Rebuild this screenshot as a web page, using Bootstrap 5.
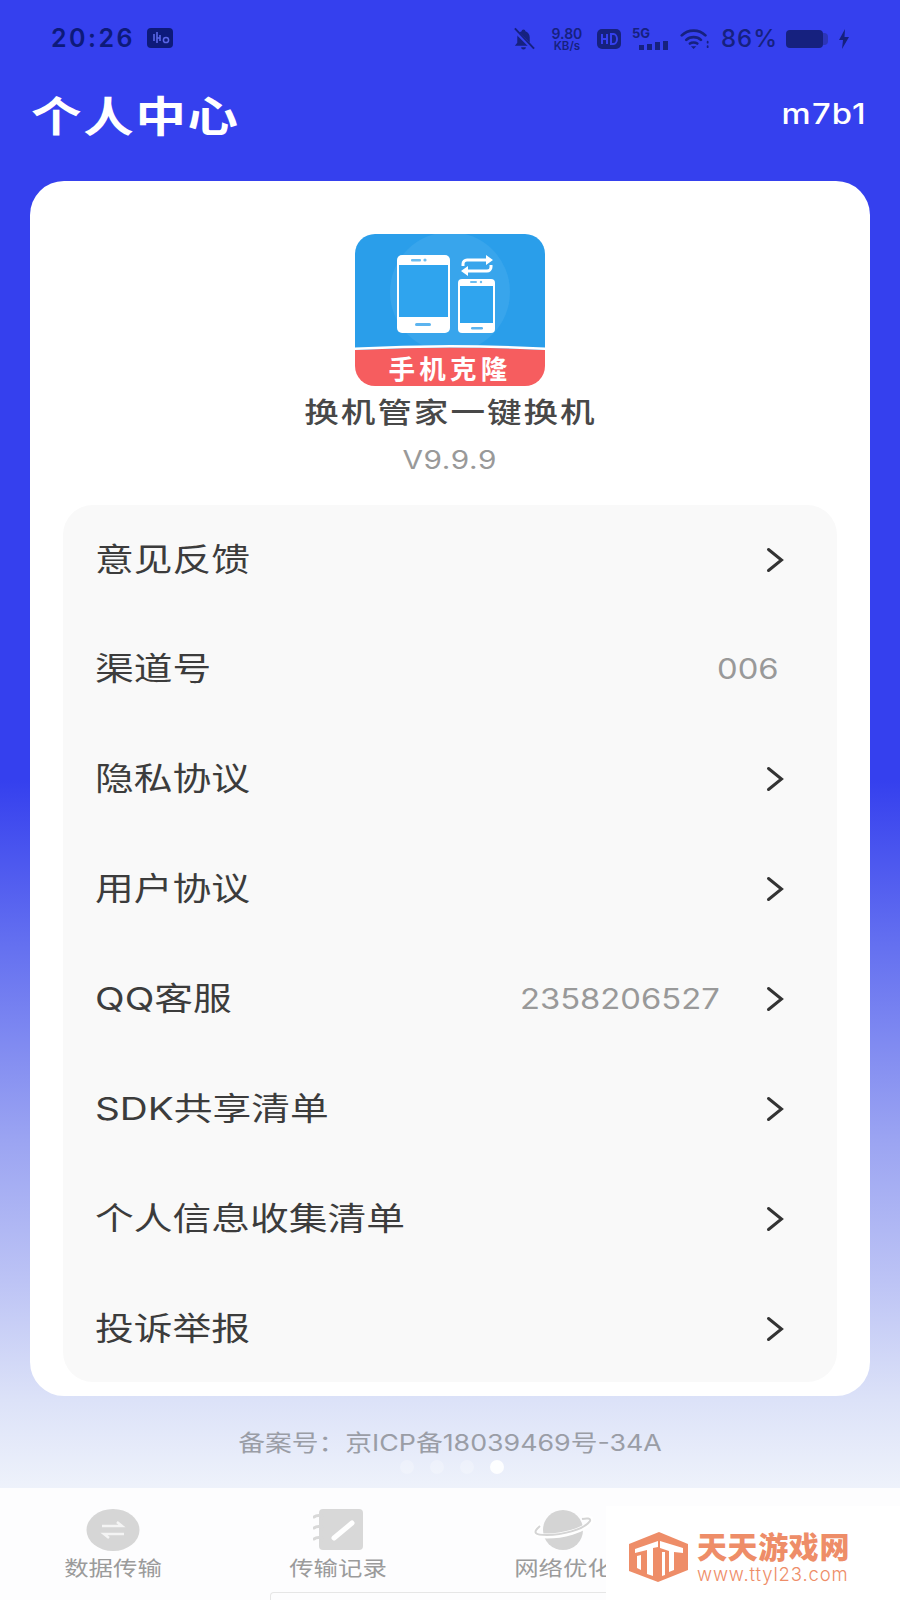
<!DOCTYPE html>
<html lang="zh">
<head>
<meta charset="utf-8">
<title>个人中心</title>
<link rel="stylesheet" href="https://cdn.jsdelivr.net/npm/bootstrap@5.3.0/dist/css/bootstrap.min.css">
<style>
html,body{margin:0;padding:0}
body{width:900px;height:1600px;overflow:hidden;font-family:"Inter","Noto Sans CJK SC",sans-serif;background:#fff}
.screen{width:900px;height:1600px;background:linear-gradient(180deg,#3540ee 0,#3540ee 780px,#6470f0 945px,#9ba4f2 1140px,#bcc3f5 1280px,#dce2f8 1400px,#eef2fb 1488px)}
.wl,.wr,.wc{display:inline-block;white-space:nowrap}
.wl{transform:scaleX(1.23);transform-origin:left center}
.wr{transform:scaleX(1.17);transform-origin:right center}
.wc{transform:scaleX(1.19);transform-origin:center}
.stat{height:76px;padding:24px 50px 0 51px;color:#0d1a7a}
.stat-l{gap:12px}
.stat-time{font-size:25px;font-weight:600;letter-spacing:2.500px;line-height:28px}
.stat-r{font-size:24px;font-weight:500;letter-spacing:1px;height:30px;gap:11px;color:#16217f}
.speed{font-weight:600;text-align:center;width:38px;letter-spacing:0}
.speed b{display:block;font-weight:600;font-size:14px;line-height:13px}
.speed em{display:block;font-style:normal;font-size:11.500px;line-height:12px}
.sig{width:37px;letter-spacing:0}
.sig-t{display:block;font-size:13px;font-weight:700;line-height:11px}
.sig svg{display:block}
.bell{margin-right:2px}
.wifi{margin-right:1px}
.pct{margin-right:-3px}
.batt{margin-right:-3px}
.head{height:105px;padding:0 33px 23px 31px;color:#fff}
.head-t{font-size:42px;font-weight:700;letter-spacing:1.500px;line-height:1;transform:scaleX(1.2)}
.head-u{font-size:28px;font-weight:500;letter-spacing:1px;padding-bottom:6px}
.panel{width:840px;height:1215px;margin-left:30px;background:#fff;border-radius:34px;padding:53px 33px 14px}
.logo{display:block;width:190px;height:152px}
.app-n{font-size:28px;font-weight:500;color:#484848;letter-spacing:1.600px;line-height:36px;margin-top:9px;transform:scaleX(1.235)}
.app-v{font-size:25px;color:#999;line-height:36px;margin-top:11px;letter-spacing:.5px}
.menu{height:877px;margin-top:27px;background:#f9f9f9;border-radius:30px;padding:0 53px 0 32px}
.menu-r{height:110px;color:#3c3c3c;font-size:31.500px;line-height:1}
.menu-r:first-child{height:109px}
.val{font-size:28px;color:#999}
.chev{width:18px;height:26px;margin-left:46px;flex:none}
.val-pad{width:5px;flex:none}
.rec{height:92px;color:#9a9da6;font-size:22.500px;padding-top:1px}
.tabs{height:112px;background:#fdfdfe;position:relative;padding-top:20px}
.tab{width:225px;color:#9b9b9b;font-size:20.500px;line-height:26px}
.tab svg{display:block;height:44px;margin-bottom:4px}
.dots{position:absolute;left:400px;top:-28px}
.dots i{width:14px;height:14px;border-radius:50%;background:#fff;opacity:.25;display:block}
.dots i:last-child{opacity:.9}
.homebar{position:absolute;left:270px;bottom:0;width:340px;height:8px;border:1px solid #e6e6e6;border-bottom:0;border-radius:4px 4px 0 0}
.mark-box{position:absolute;left:606px;top:18px;width:294px;height:94px;background:#fff;color:#ee8d68;padding:10px 0 0 23px}
.mark-t{font-size:30px;font-weight:900;line-height:32px;letter-spacing:.6px}
.mark-u{font-size:18.500px;font-weight:300;line-height:22px;letter-spacing:.85px}
</style>
</head>
<body>
<svg width="0" height="0" class="position-absolute"><defs><path id="chev-p" d="M2.500 2.500L15.500 13 2.500 23.500" fill="none" stroke="#333" stroke-width="3" stroke-linecap="round"/></defs></svg>
<div class="screen d-flex flex-column">
  <div class="stat d-flex justify-content-between align-items-start">
    <div class="stat-l d-flex align-items-center">
      <span class="stat-time">20:26</span>
      <svg width="26" height="20" viewBox="0 0 26 20"><rect width="26" height="20" rx="4" fill="#0d1a7a"/><path d="M7 6v7M10 4v11M10 10h3M13 7v6" stroke="#5a66e8" stroke-width="1.6" fill="none"/><circle cx="19" cy="12" r="2.600" fill="none" stroke="#5a66e8" stroke-width="1.5"/></svg>
    </div>
    <div class="stat-r d-flex align-items-center">
      <svg class="bell" width="23" height="24" viewBox="0 0 24 24" fill="#16217f"><path d="M12 2a2 2 0 0 1 2 2c3 1 4.500 3.500 4.500 6.500V16l2.500 3H3l2.500-3v-5.500C5.500 7.500 7 5 10 4a2 2 0 0 1 2-2zM9.500 20.500h5a2.500 2.500 0 0 1-5 0z"/><path d="M2 2l20 20" stroke="#3540ee" stroke-width="4"/><path d="M3 1l20 21" stroke="#16217f" stroke-width="2"/></svg>
      <span class="speed"><b>9.80</b><em>KB/s</em></span>
      <svg width="24" height="20" viewBox="0 0 24 20"><rect width="24" height="20" rx="5" fill="#16217f"/><path d="M5 5v10M5 10h5M10 5v10M14 5v10h2.500a3.500 5 0 0 0 0-10z" stroke="#3540ee" stroke-width="2" fill="none"/></svg>
      <span class="sig"><span class="sig-t">5G</span><svg width="37" height="11" viewBox="0 0 37 11"><rect x="7" y="6" width="5" height="5" fill="#16217f"/><rect x="15" y="5" width="5" height="6" fill="#16217f"/><rect x="23" y="3" width="5" height="8" fill="#16217f"/><rect x="31" y="2" width="5" height="9" fill="#16217f"/></svg></span>
      <svg class="wifi" width="29" height="22" viewBox="0 0 32 24" fill="none" stroke="#16217f" stroke-width="3" stroke-linecap="round"><path d="M2 8c7-7 19-7 26 0M7 13c4-4 12-4 16 0M11 17c2-1.500 6-1.500 8 0"/><path d="M12 20h6l-3 3z" fill="#16217f" stroke="none"/><path d="M30.500 15v1M30.500 20v1" stroke-width="2"/></svg>
      <span class="pct">86%</span>
      <svg class="batt" width="44" height="20" viewBox="0 0 44 20"><rect width="37" height="18" y="1" rx="4" fill="#16217f"/><path d="M37 4h1a4 4 0 0 1 4 4v4a4 4 0 0 1-4 4h-1z" fill="#2c35b8"/></svg>
      <svg width="12" height="20" viewBox="0 0 12 20" fill="#16217f"><path d="M7 0L1 11h4l-1 9 7-12H6.500z"/></svg>
    </div>
  </div>
  <div class="head d-flex justify-content-between align-items-center">
    <span class="wl head-t">个人中心</span>
    <span class="wr head-u">m7b1</span>
  </div>
  <div class="panel">
    <div class="d-flex flex-column align-items-center">
      <svg class="logo" viewBox="0 0 190 152">
        <path d="M0 116V20A20 20 0 0 1 20 0H170a20 20 0 0 1 20 20V116z" fill="#2a9eea"/>
        <circle cx="95" cy="58" r="60" fill="#38a5ec"/>
        <rect x="42" y="21" width="53" height="78" rx="5" fill="#fff"/>
        <rect x="44" y="31" width="49" height="52" fill="#2fa4ee"/>
        <rect x="56" y="25" width="10" height="2.500" rx="1" fill="#6cbdf0"/><circle cx="70" cy="26" r="1.600" fill="#6cbdf0"/>
        <rect x="60" y="89" width="16" height="3" rx="1.500" fill="#5cb4ef"/>
        <rect x="103" y="45" width="37" height="54" rx="4" fill="#fff"/>
        <rect x="105" y="52" width="33" height="37" fill="#2fa4ee"/>
        <rect x="115" y="47" width="7" height="2" rx="1" fill="#6cbdf0"/><circle cx="126" cy="48" r="1.200" fill="#6cbdf0"/>
        <rect x="116" y="93" width="12" height="2.500" rx="1.200" fill="#5cb4ef"/>
        <g fill="none" stroke="#fff" stroke-width="3"><path d="M108 32v-2a4 4 0 0 1 4-4h22"/><path d="M136 31v2a4 4 0 0 1-4 4h-22"/></g>
        <path d="M131 21l7 5-7 5zM113 32l-7 5 7 5z" fill="#fff"/>
        <path d="M0 116q95-5 190 0V132a20 20 0 0 1-20 20H20a20 20 0 0 1-20-20z" fill="#f65d5f"/>
        <path d="M0 113.500q95-5 190 0v2.500q-95-5-190 0z" fill="#fff"/>
        <text x="95" y="145" text-anchor="middle" font-size="26.500" font-weight="700" fill="#fff" letter-spacing="4.200" font-family="Noto Sans CJK SC,sans-serif">手机克隆</text>
      </svg>
      <div class="wc app-n">换机管家一键换机</div>
      <div class="wc app-v">V9.9.9</div>
    </div>
    <div class="menu">
      <div class="menu-r d-flex align-items-center"><span class="flex-grow-1"><span class="wl">意见反馈</span></span><svg class="chev" viewBox="0 0 18 26"><use href="#chev-p"/></svg></div>
      <div class="menu-r d-flex align-items-center"><span class="flex-grow-1"><span class="wl">渠道号</span></span><span class="wr val">006</span><span class="val-pad"></span></div>
      <div class="menu-r d-flex align-items-center"><span class="flex-grow-1"><span class="wl">隐私协议</span></span><svg class="chev" viewBox="0 0 18 26"><use href="#chev-p"/></svg></div>
      <div class="menu-r d-flex align-items-center"><span class="flex-grow-1"><span class="wl">用户协议</span></span><svg class="chev" viewBox="0 0 18 26"><use href="#chev-p"/></svg></div>
      <div class="menu-r d-flex align-items-center"><span class="flex-grow-1"><span class="wl">QQ客服</span></span><span class="wr val">2358206527</span><svg class="chev" viewBox="0 0 18 26"><use href="#chev-p"/></svg></div>
      <div class="menu-r d-flex align-items-center"><span class="flex-grow-1"><span class="wl">SDK共享清单</span></span><svg class="chev" viewBox="0 0 18 26"><use href="#chev-p"/></svg></div>
      <div class="menu-r d-flex align-items-center"><span class="flex-grow-1"><span class="wl">个人信息收集清单</span></span><svg class="chev" viewBox="0 0 18 26"><use href="#chev-p"/></svg></div>
      <div class="menu-r d-flex align-items-center"><span class="flex-grow-1"><span class="wl">投诉举报</span></span><svg class="chev" viewBox="0 0 18 26"><use href="#chev-p"/></svg></div>
    </div>
  </div>
  <div class="rec d-flex justify-content-center align-items-center"><span class="wc">备案号：京ICP备18039469号-34A</span></div>
  <div class="tabs d-flex">
    <div class="dots d-flex gap-3"><i></i><i></i><i></i><i></i></div>
    <div class="tab text-center d-flex flex-column align-items-center">
      <svg width="54" viewBox="0 0 54 44"><ellipse cx="27" cy="22" rx="26.500" ry="21" fill="#d6d6d6"/><path d="M16 18h20l-5-4M38 26H18l5 4" fill="none" stroke="#f4f4f4" stroke-width="2.500"/></svg>
      <span class="wc">数据传输</span>
    </div>
    <div class="tab text-center d-flex flex-column align-items-center">
      <svg width="50" viewBox="0 0 50 44"><rect x="6" y="1" width="44" height="41" rx="4" fill="#d8d8d8"/><path d="M1 9c4-3 9-1 9 1M1 20c4-3 9-1 9 1M1 31c4-3 9-1 9 1" stroke="#d8d8d8" stroke-width="3" stroke-linecap="round" fill="none"/><path d="M21 30L39 15" stroke="#fff" stroke-width="5" stroke-linecap="round"/></svg>
      <span class="wc">传输记录</span>
    </div>
    <div class="tab text-center d-flex flex-column align-items-center">
      <svg width="60" viewBox="0 0 60 44"><circle cx="30" cy="22" r="20" fill="#d4d4d4"/><path d="M8 17C-2 25 1 28 14 28c14 0 38-5 44-15 1-3-3-4-8-3" fill="none" stroke="#fff" stroke-width="5"/><path d="M7 18C-1 25 2 27 14 27c14 0 37-5 43-14 1-3-3-3-8-2" fill="none" stroke="#d4d4d4" stroke-width="2"/></svg>
      <span class="wc">网络优化</span>
    </div>
    <div class="homebar"></div>
    <div class="mark-box d-flex align-items-center gap-2">
      <svg width="60" height="52" viewBox="0 0 60 52" class="flex-shrink-0"><path d="M30 0L59 12V38L29 50 0 39V12z" fill="#ee8d68"/><path d="M6 17L29 9V15L24 16V44L18 42V18L6 21zM8 24L12 23V38L8 36zM31 9L54 16V21L45 20V38L40 40V19L31 16zM33 20H36V43L33 44z" fill="#fff"/></svg>
      <div>
        <div class="mark-t">天天游戏网</div>
        <div class="mark-u">www.ttyl23.com</div>
      </div>
    </div>
  </div>
</div>
</body>
</html>
